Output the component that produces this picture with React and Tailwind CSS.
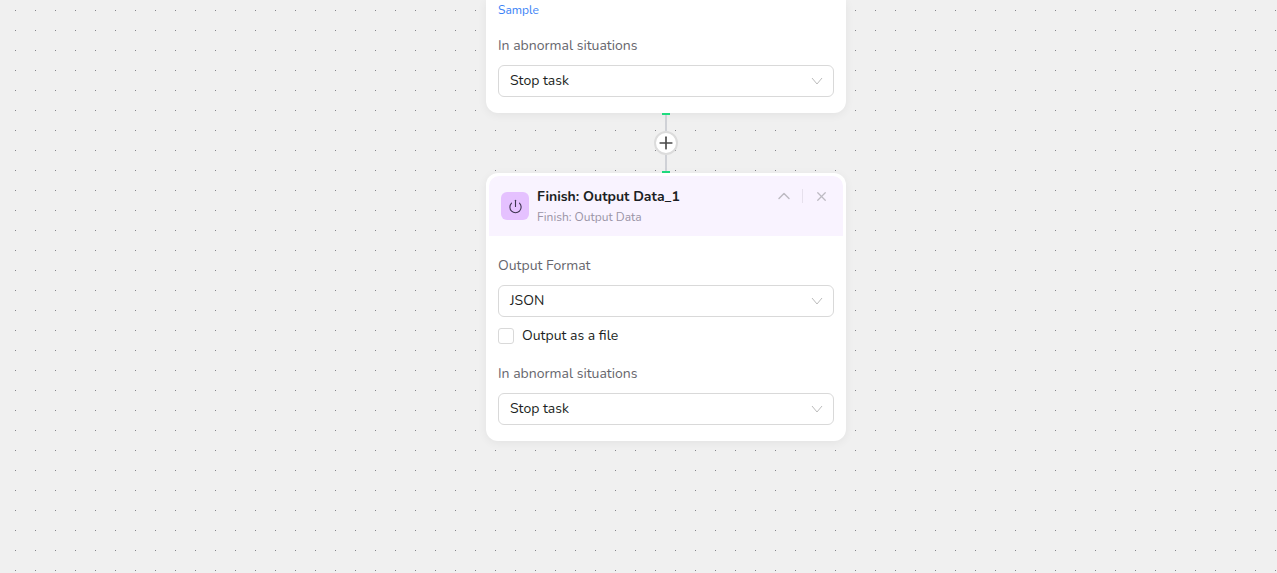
import React from 'react';
import { ChevronUp, Plus, Power, X } from 'lucide-react';

const Select = ({ value }) => (
  <div className="flex h-8 items-center justify-between rounded-md border border-[#d9d9d9] bg-white pl-[11px] pr-[10px] text-sm text-[#1c1f23]">
    <span>{value}</span>
    <svg width="12" height="8" viewBox="0 0 12 8" fill="none" className="text-[#bcbcbc]">
      <path d="M1 1l5 6 5-6" stroke="currentColor" strokeWidth="1" />
    </svg>
  </div>
);

const Label = ({ children }) => (
  <div className="text-sm leading-5 text-[#66666d]">{children}</div>
);

const App = () => {
  return (
    <div className="relative h-[573px] w-full overflow-hidden bg-[#f0f0f0] bg-[radial-gradient(circle_at_15.5px_10.5px,#85858a_0.7px,transparent_0.7px)] bg-[size:20px_20px] font-['Nunito','Lato','Noto_Sans',sans-serif]">
      <div className="absolute left-[486px] top-0 flex w-[360px] flex-col items-center">
        {/* previous node, cut off by the top of the canvas */}
        <div className="h-[113px] w-full rounded-b-xl bg-white px-3 shadow-[0_2px_10px_rgba(0,0,0,0.06)]">
          <div className="pt-[2px] text-xs leading-4 text-[#3b82f6]">Sample</div>
          <div className="mt-[18px]">
            <Label>In abnormal situations</Label>
          </div>
          <div className="mt-[9px]">
            <Select value="Stop task" />
          </div>
        </div>

        {/* connector */}
        <div className="h-[2px] w-2 bg-[#1fdc7f]" />
        <div className="h-4 w-[2px] bg-[#cfd1d6]" />
        <div className="flex h-6 w-6 items-center justify-center rounded-full border-2 border-[#dcdcdc] bg-white text-[#4a4a4a]">
          <Plus size={20} strokeWidth={2} className="shrink-0" />
        </div>
        <div className="h-4 w-[2px] bg-[#cfd1d6]" />
        <div className="h-[2px] w-2 bg-[#1fdc7f]" />

        {/* finish node */}
        <div className="h-[268px] w-full rounded-xl bg-white p-[3px] shadow-[0_2px_10px_rgba(0,0,0,0.06)]">
          <div className="flex h-[60px] items-start rounded-t-[10px] bg-[#f9f3ff] pl-3 pr-[14px] pt-[11px]">
            <div className="mt-[5px] flex h-7 w-7 shrink-0 items-center justify-center rounded-md bg-[#e5c1ff] text-[#3d3350]">
              <Power size={15} strokeWidth={1.75} />
            </div>
            <div className="ml-2 flex-1">
              <div className="text-sm font-bold leading-5 text-[#1c1f23]">Finish: Output Data_1</div>
              <div className="mt-[2px] text-xs leading-4 text-[#9a94a6]">Finish: Output Data</div>
            </div>
            <div className="mt-[2px] flex h-[14px] items-center text-[#bdbac2]">
              <ChevronUp size={20} strokeWidth={1.75} />
              <div className="ml-2 mr-[11px] h-[14px] w-px bg-[#e6e0ec]" />
              <X size={15} strokeWidth={2} />
            </div>
          </div>

          <div className="px-[9px] pt-5">
            <Label>Output Format</Label>
            <div className="mt-[9px]">
              <Select value="JSON" />
            </div>
            <div className="mt-[11px] flex items-center gap-2">
              <div className="h-4 w-4 rounded-[3px] border border-[#d9d9d9] bg-white" />
              <span className="text-sm leading-4 text-[#1c1f23]">Output as a file</span>
            </div>
            <div className="mt-5">
              <Label>In abnormal situations</Label>
            </div>
            <div className="mt-[9px]">
              <Select value="Stop task" />
            </div>
          </div>
        </div>
      </div>
    </div>
  );
};

export default App;
